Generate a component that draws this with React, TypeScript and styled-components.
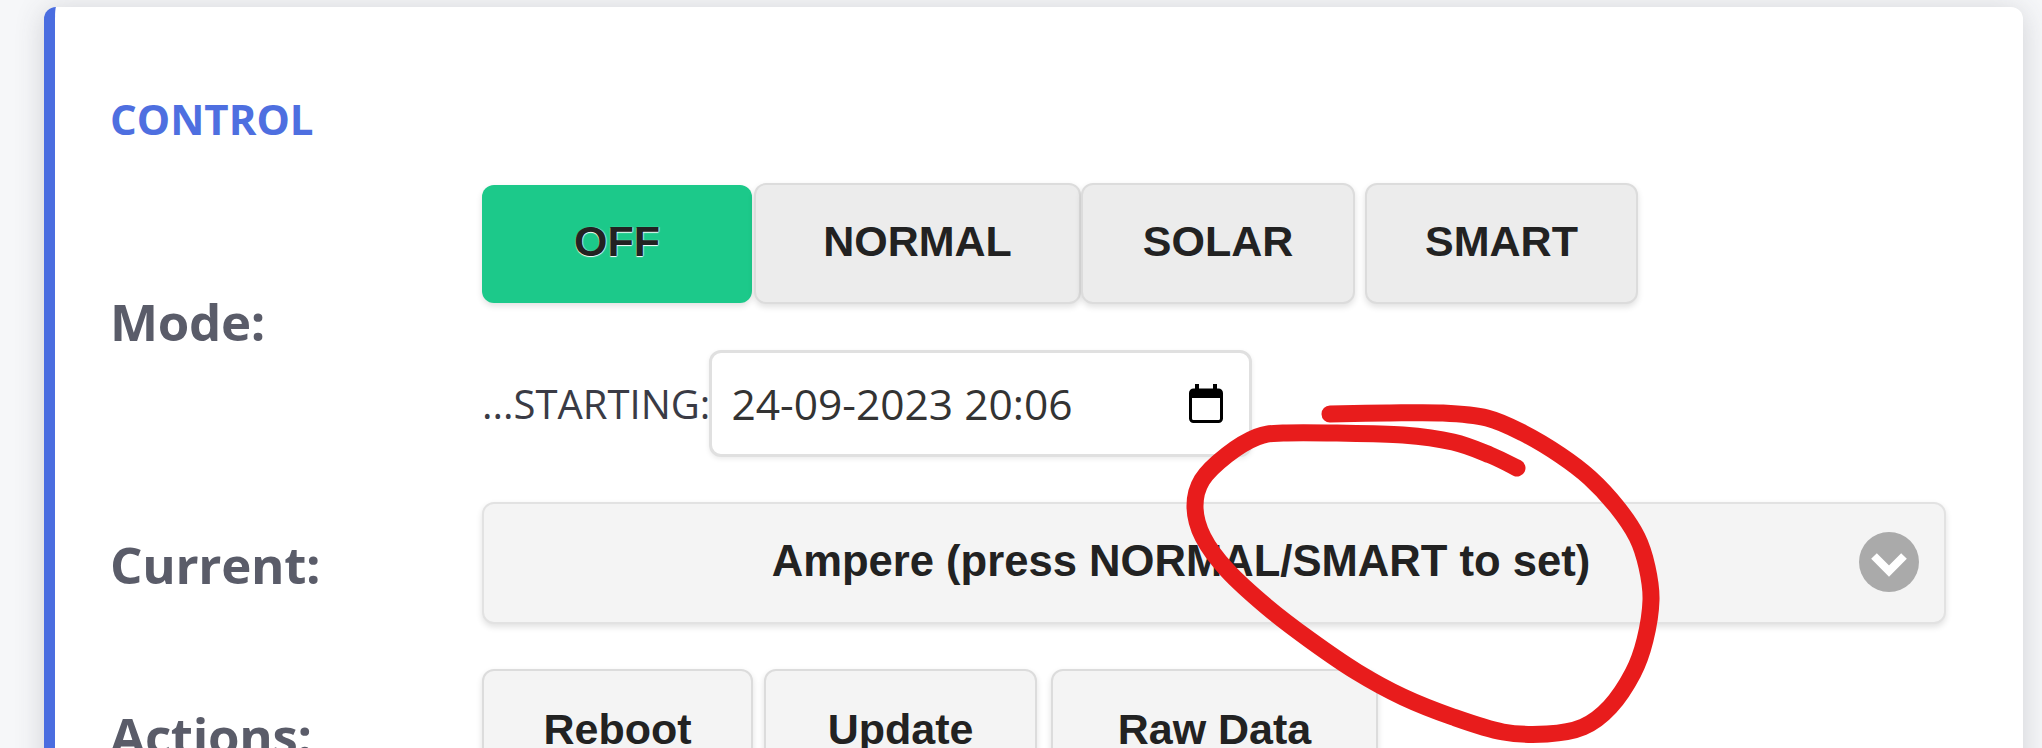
import React from "react";
import styled, { createGlobalStyle } from "styled-components";

const Global = createGlobalStyle`
  html, body { margin: 0; padding: 0; background: #f6f7f9; }
  body { width: 2042px; height: 748px; overflow: hidden; font-family: "Open Sans", "Liberation Sans", sans-serif; }
`;

const Page = styled.div`
  position: relative;
  width: 2042px;
  height: 748px;
  overflow: hidden;
  padding: 7px 19px 0 44px;
  box-sizing: border-box;
`;

const Card = styled.section`
  box-sizing: border-box;
  width: 1979px;
  height: 900px;
  background: #fff;
  border-left: 11px solid #4a6de0;
  border-radius: 12px;
  padding: 91px 77px 0 55px;
  box-shadow: 0 3px 30px rgba(58, 59, 69, 0.2);
`;

const Heading = styled.h2`
  margin: 0 0 44px;
  font-size: 42px;
  line-height: 41px;
  font-weight: 700;
  color: #4e6fe0;
  text-transform: uppercase;
`;

const Row = styled.div<{ $mb: number }>`
  display: grid;
  grid-template-columns: 372px 1fr;
  align-items: center;
  margin-bottom: ${(p) => p.$mb}px;
`;

const Label = styled.div`
  font-size: 51px;
  font-weight: 700;
  letter-spacing: -0.3px;
  line-height: 60px;
  padding-top: 2px;
  color: #5a5c69;
`;

const Stack = styled.div`
  display: flex;
  flex-direction: column;
  gap: 46px;
`;

const Buttons = styled.div`
  display: flex;
  align-items: center;
`;

const Btn = styled.div<{ $w: number; $ml?: number; $active?: boolean; $h?: number }>`
  box-sizing: border-box;
  width: ${(p) => p.$w}px;
  height: ${(p) => p.$h ?? 121}px;
  margin-left: ${(p) => p.$ml ?? 0}px;
  padding-bottom: 5px;
  display: flex;
  align-items: center;
  justify-content: center;
  font-family: "Liberation Sans", Arial, sans-serif;
  font-weight: 700;
  font-size: 43px;
  color: #222;
  border-radius: 12px;
  background: ${(p) => (p.$active ? "#1cc98a" : "#ececec")};
  border: ${(p) => (p.$active ? "none" : "2px solid #dcdcdc")};
  box-shadow: 0 3px 6px rgba(0, 0, 0, 0.12);
  ${(p) => (p.$active ? "text-shadow: 0 1px 1px #fff, 1px 0 1px rgba(255,255,255,.6);" : "")}
`;

const ActionBtn = styled(Btn)`
  background: #f4f4f4;
  height: 130px;
  padding-bottom: 10px;
`;

const Starting = styled.div`
  display: flex;
  align-items: center;
  font-size: 40px;
  color: #3a3b45;
`;

const DateBox = styled.div`
  box-sizing: border-box;
  width: 543px;
  height: 107px;
  margin-left: -1px;
  display: flex;
  align-items: center;
  justify-content: space-between;
  padding: 0 26px 0 19px;
  border: 3px solid #e0e0e0;
  border-radius: 12px;
  font-size: 42.5px;
  color: #333;
  box-shadow: 0 2px 5px rgba(0, 0, 0, 0.08);
  background: #fff;
`;

const Select = styled.div`
  box-sizing: border-box;
  position: relative;
  width: 1464px;
  height: 122px;
  display: flex;
  align-items: center;
  justify-content: center;
  padding: 0 66px 4px 0;
  font-family: "Liberation Sans", Arial, sans-serif;
  font-weight: 700;
  font-size: 43.6px;
  color: #222;
  background: #f4f4f4;
  border: 2px solid #e2e2e2;
  border-radius: 12px;
  box-shadow: 0 3px 6px rgba(0, 0, 0, 0.12);
`;

const Chevron = styled.svg`
  position: absolute;
  right: 25px;
  top: 28px;
  width: 60px;
  height: 60px;
`;

const Scribble = styled.svg`
  position: absolute;
  left: 0;
  top: 0;
  width: 2042px;
  height: 748px;
  pointer-events: none;
`;

// Sample points of the hand-drawn circle, in page pixels.
const stroke: [number, number][] = [
  [1330, 414], [1387, 413], [1443, 413], [1487, 418], [1523, 433], [1560, 455],
  [1590, 478], [1617, 507], [1637, 537], [1647, 567], [1651, 600], [1645, 640],
  [1633, 673], [1610, 707], [1583, 727], [1547, 734], [1503, 732], [1453, 717],
  [1403, 697], [1357, 672], [1310, 640], [1267, 607], [1227, 570], [1203, 537],
  [1195, 507], [1202, 480], [1227, 455], [1257, 437], [1283, 433], [1337, 433],
  [1403, 435], [1453, 442], [1490, 455], [1517, 468],
];

const smooth = (pts: [number, number][]) => {
  let d = `M${pts[0][0]} ${pts[0][1]}`;
  for (let i = 0; i < pts.length - 1; i++) {
    const p0 = pts[Math.max(i - 1, 0)];
    const p1 = pts[i];
    const p2 = pts[i + 1];
    const p3 = pts[Math.min(i + 2, pts.length - 1)];
    d += ` C${p1[0] + (p2[0] - p0[0]) / 6} ${p1[1] + (p2[1] - p0[1]) / 6} ${p2[0] - (p3[0] - p1[0]) / 6} ${p2[1] - (p3[1] - p1[1]) / 6} ${p2[0]} ${p2[1]}`;
  }
  return d;
};

export default function App() {
  return (
    <Page>
      <Global />
      <Card>
        <Heading>Control</Heading>
        <Row $mb={45}>
          <Label>Mode:</Label>
          <Stack>
            <Buttons>
              <Btn $active $w={270} $h={118}>OFF</Btn>
              <Btn $w={327} $ml={2}>NORMAL</Btn>
              <Btn $w={274}>SOLAR</Btn>
              <Btn $w={273} $ml={10}>SMART</Btn>
            </Buttons>
            <Starting>
              ...STARTING:
              <DateBox>
                24-09-2023 20:06
                <svg width="34" height="39" viewBox="0 0 34 39" aria-hidden="true">
                  <rect x="1.5" y="6" width="31" height="31.5" rx="3" fill="#fff" stroke="#000" strokeWidth="3" />
                  <path d="M1.5 6h31v8h-31z" fill="#000" />
                  <path d="M8 0v7M26 0v7" stroke="#000" strokeWidth="4" />
                </svg>
              </DateBox>
            </Starting>
          </Stack>
        </Row>
        <Row $mb={45}>
          <Label>Current:</Label>
          <Select>
            Ampere (press NORMAL/SMART to set)
            <Chevron viewBox="0 0 60 60" aria-hidden="true">
              <circle cx="30" cy="30" r="30" fill="#aaa" />
              <path d="M15 24l15 15 15-15" fill="none" stroke="#fff" strokeWidth="8" />
            </Chevron>
          </Select>
        </Row>
        <Row $mb={0}>
          <Label>Actions:</Label>
          <Buttons>
            <ActionBtn $w={271}>Reboot</ActionBtn>
            <ActionBtn $w={273} $ml={11}>Update</ActionBtn>
            <ActionBtn $w={327} $ml={14}>Raw Data</ActionBtn>
          </Buttons>
        </Row>
      </Card>
      <Scribble viewBox="0 0 2042 748" aria-hidden="true">
        <path
          d={smooth(stroke)}
          fill="none"
          stroke="#e81c1c"
          strokeWidth="17"
          strokeLinecap="round"
          strokeLinejoin="round"
        />
      </Scribble>
    </Page>
  );
}
